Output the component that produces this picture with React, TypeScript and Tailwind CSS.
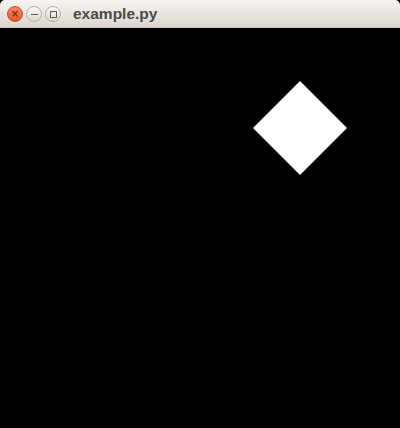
export default function App() {
  return (
    <div className="w-[400px] h-[428px] flex flex-col bg-black overflow-hidden">
      <div className="h-[28px] shrink-0 flex items-center rounded-t-[5px] bg-gradient-to-b from-[#f6f5f3] to-[#dcd6d0] border-b border-[#c9c3bc]">
        <div className="flex items-center gap-[3px] pl-[7px] pt-px">
          <div className="w-[16px] h-[16px] rounded-full bg-gradient-to-b from-[#f7855e] to-[#e4572a] border border-[#c74a24] flex items-center justify-center text-[#7a2a12] text-[10px] leading-none font-bold font-['DejaVu_Sans',sans-serif]">
            ×
          </div>
          <div className="w-[16px] h-[16px] rounded-full bg-gradient-to-b from-[#f9f8f6] to-[#dedad5] border border-[#b3aea8] flex items-center justify-center">
            <div className="w-[7px] h-px bg-[#5e5a56]" />
          </div>
          <div className="w-[16px] h-[16px] rounded-full bg-gradient-to-b from-[#f9f8f6] to-[#dedad5] border border-[#b3aea8] flex items-center justify-center">
            <div className="w-[7px] h-[7px] border border-[#5e5a56]" />
          </div>
        </div>
        <div className="ml-[12px] pt-px text-[15.5px] font-bold text-[#4c4a47] font-['Liberation_Sans',Arial,sans-serif] leading-none">
          example.py
        </div>
      </div>
      <div className="flex-1 flex">
        <svg width="400" height="400" viewBox="0 0 400 400">
          <polygon points="300,53 347,100 300,147 253,100" fill="#fff" />
        </svg>
      </div>
    </div>
  )
}
